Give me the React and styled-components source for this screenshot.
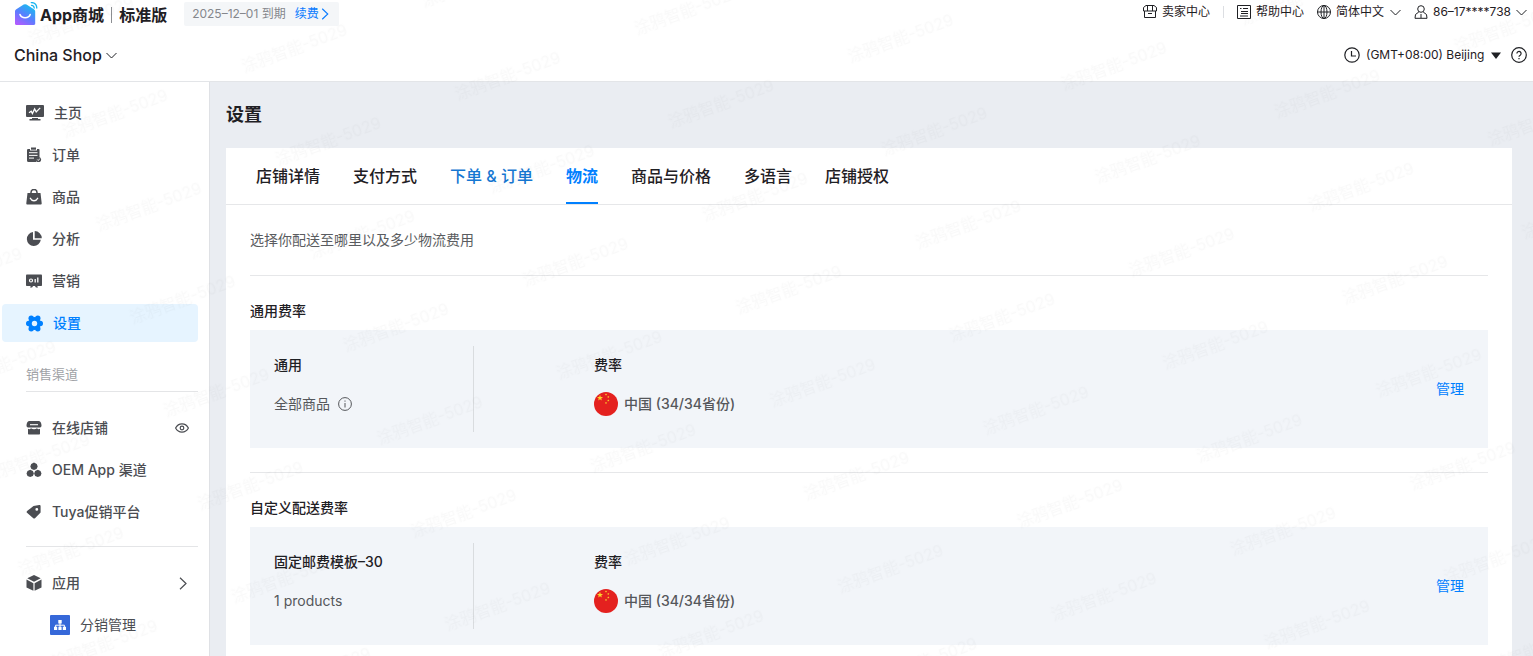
import React from 'react';
import styled, { createGlobalStyle } from 'styled-components';

const GlobalStyle = createGlobalStyle`
  * { box-sizing: border-box; }
  body {
    margin: 0;
    background: #eaedf2;
    color: #1f2024;
    font-family: Inter, "Noto Sans CJK SC", sans-serif;
    font-size: 14px;
    line-height: 20px;
    overflow: hidden;
  }
  a { text-decoration: none; color: inherit; }
  button, select { font: inherit; color: inherit; background: none; border: 0; padding: 0; margin: 0; }
  h1, h2, h3, p, ul { margin: 0; padding: 0; }
  svg { display: block; flex: none; }
`;

/* ---------- layout ---------- */

const Page = styled.div`
  position: relative;
  display: flex;
  flex-direction: column;
  height: 100vh;
  overflow: hidden;
`;

const Header = styled.header`
  flex: none;
  display: flex;
  flex-direction: column;
  gap: 13px;
  background: #fff;
  border-bottom: 1px solid #e3e5e8;
  padding: 0 6px 12px 14px;
`;

const HeaderRow = styled.div`
  display: flex;
  align-items: ${(p) => p.$align || 'center'};
  justify-content: space-between;
`;

const Body = styled.div`
  flex: 1;
  display: flex;
  min-height: 0;
`;

/* ---------- header ---------- */

const Brand = styled.div`
  display: flex;
  align-items: center;
  height: 28px;
`;

const BrandName = styled.a`
  display: flex;
  align-items: center;
  gap: 2px;
  padding-top: 2px;
  font-size: 16px;
  font-weight: 700;
  line-height: 24px;
`;

const BrandRule = styled.span`
  width: 1px;
  height: 16px;
  margin: 0 5px;
  background: #8c8e92;
`;

const Expiry = styled.div`
  display: flex;
  align-items: center;
  gap: 9px;
  height: 24px;
  margin-left: 17px;
  padding: 0 10px 0 8px;
  border-radius: 2px;
  background: #f4f6f8;
  color: #85878c;
  font-size: 12px;
`;

const RenewLink = styled.a`
  display: flex;
  align-items: center;
  gap: 2px;
  color: #0a7cff;
`;

const Tools = styled.nav`
  display: flex;
  align-items: center;
  gap: 13px;
  height: 24px;
  font-size: 12px;
`;

const ToolRule = styled.span`
  width: 1px;
  height: 12px;
  background: #dcdee2;
`;

const toolLayout = `
  display: flex;
  align-items: center;
  gap: 5px;
  line-height: 20px;
`;

const ToolLink = styled.a`${toolLayout}`;
const ToolButton = styled.button`${toolLayout}`;
const ToolField = styled.label`${toolLayout}`;

const PlainSelect = styled.select`
  appearance: none;
  outline: none;
  cursor: pointer;
`;

const ShopField = styled.label`
  display: flex;
  align-items: center;
  gap: 4px;
  height: 28px;
  font-size: 16px;
  font-weight: 500;
`;

const ZoneBar = styled.div`
  display: flex;
  align-items: center;
  gap: 10px;
  height: 28px;
`;

const ZoneField = styled.label`
  display: flex;
  align-items: center;
  gap: 6px;
  font-size: 12px;
`;

const HelpButton = styled.button`
  display: flex;
`;

/* ---------- sidebar ---------- */

const Sidebar = styled.aside`
  flex: none;
  width: 210px;
  padding: 12px 11px 0 2px;
  background: #fff;
  border-right: 1px solid #dfe1e5;
`;

const NavList = styled.ul`
  display: flex;
  flex-direction: column;
  gap: 4px;
  list-style: none;
`;

const NavItem = styled.a`
  display: flex;
  align-items: center;
  gap: 10px;
  height: 38px;
  padding: 0 9px 0 ${(p) => (p.$sub ? 48 : 24)}px;
  border-radius: 4px;
  font-weight: ${(p) => (p.$sub ? 400 : 500)};
  color: ${(p) => (p.$active ? '#0080ff' : '#4b4d52')};
  background: ${(p) => (p.$active ? '#e6f4ff' : 'transparent')};

  & > span { flex: 1; }
`;

const NavHeading = styled.h2`
  margin: 22px 0 17px 24px;
  padding-bottom: 7px;
  border-bottom: 1px solid #e4e5e7;
  color: #a0a2a6;
  font-size: 13px;
  font-weight: 400;
`;

const NavRule = styled.hr`
  height: 1px;
  margin: 15px 0 17px 24px;
  border: 0;
  background: #e4e5e7;
`;

/* ---------- content ---------- */

const Main = styled.main`
  flex: 1;
  min-width: 0;
  display: flex;
  flex-direction: column;
  padding: 20px 21px 0 16px;
`;

const Title = styled.h1`
  margin-bottom: 20px;
  font-size: 18px;
  font-weight: 600;
  line-height: 26px;
`;

const Panel = styled.section`
  flex: 1;
  background: #fff;
`;

const Tabs = styled.nav`
  display: flex;
  gap: 33px;
  height: 57px;
  padding: 0 30px;
  border-bottom: 1px solid #e6e7e9;
`;

const Tab = styled.a`
  height: 56px;
  font-size: 16px;
  line-height: 56px;
  font-weight: ${(p) => (p.$active ? 700 : 500)};
  color: ${(p) => (p.$active ? '#0080ff' : p.$visited ? '#1677d2' : '#1f2024')};
  box-shadow: ${(p) => (p.$active ? 'inset 0 -2px #0080ff' : 'none')};
`;

const PanelBody = styled.div`
  padding: 0 24px;
`;

const Intro = styled.p`
  padding: 25px 0;
  color: #5a5c60;
`;

const RateSection = styled.section`
  padding: 25px 0 24px;
  border-top: 1px solid #e6e7e9;
`;

const RateHeading = styled.h2`
  margin-bottom: 9px;
  font-size: 14px;
  font-weight: 500;
`;

const RateCard = styled.div`
  display: flex;
  align-items: center;
  padding: 16px 24px;
  background: #f2f5f9;
`;

const RateColumn = styled.div`
  display: flex;
  flex-direction: column;
  gap: 17px;
  height: 86px;
  padding-top: 9px;
  width: ${(p) => (p.$first ? '200px' : 'auto')};
  border-right: ${(p) => (p.$first ? '1px solid #d9dcdf' : 'none')};
  margin-right: ${(p) => (p.$first ? '120px' : '0')};
`;

const RateLabel = styled.h3`
  font-size: 14px;
  font-weight: 500;
`;

const RateValue = styled.div`
  display: flex;
  align-items: center;
  gap: ${(p) => (p.$strong ? 6 : 8)}px;
  height: 24px;
  color: #55575b;
  font-weight: ${(p) => (p.$strong ? 500 : 400)};
`;

const ManageLink = styled.a`
  margin-left: auto;
  color: #0080ff;
`;

/* ---------- watermark ---------- */

const WatermarkLayer = styled.svg`
  position: absolute;
  inset: 0;
  width: 100%;
  height: 100%;
  pointer-events: none;
  opacity: 0.02;
`;

/* ---------- icons ---------- */

const Line = ({ w = 14, h, box = '0 0 14 14', sw = 1, children }) => (
  <svg width={w} height={h || w} viewBox={box} fill="none" stroke="currentColor" strokeWidth={sw} aria-hidden="true">
    {children}
  </svg>
);

const Solid = ({ w = 16, box = '0 0 16 16', children }) => (
  <svg width={w} height={w} viewBox={box} fill="currentColor" aria-hidden="true">{children}</svg>
);

const ChevronDown = () => <Line w={11} h={7} box="0 0 11 7"><path d="M.5 1l5 5 5-5" /></Line>;

const LogoIcon = () => (
  <svg width="24" height="26" viewBox="0 0 24 26" aria-hidden="true">
    <defs>
      <linearGradient id="logoFill" x1="0.200" y1="1" x2="0.800" y2="0">
        <stop offset="0" stopColor="#b05cff" />
        <stop offset=".45" stopColor="#5a7dff" />
        <stop offset="1" stopColor="#12c2ee" />
      </linearGradient>
    </defs>
    <path d="M1 9.500c0-1 .5-1.800 1.300-2.300l7.400-4.600a2.500 2.500 0 0 1 2.800 0l7.400 4.600c.8.500 1.300 1.300 1.300 2.300v12.300c0 .7-.5 1.200-1.200 1.200H2.200c-.7 0-1.200-.5-1.200-1.200z" fill="url(#logoFill)" />
    <path d="M6 12.500c1.600 4.400 8.600 4.400 10.200 0" fill="none" stroke="#fff" strokeWidth="1.600" strokeLinecap="round" />
    <path d="M17.500 3.300c1.600.1 2.600 1.100 2.700 2.700M17.300.5c3.400.100 5.400 2.200 5.500 5.500" fill="none" stroke="#18b4f0" strokeWidth="1.300" strokeLinecap="round" />
  </svg>
);

const SellerIcon = () => (
  <Line><path d="M3 .5h8l2.500 2v3.500H.5V2.500zM1.500 6v6.500h11V6M4.500.5V6M9.500.5V6M5 8.500h4" /></Line>
);

const DocIcon = () => (
  <Line><path d="M.5.5h13v13H.5zM3 3.500h1.500M6 3.500h5M4 6.500h7M4 8.500h7M3 11h8" /></Line>
);

const GlobeIcon = () => (
  <Line><circle cx="7" cy="7" r="6.500" /><ellipse cx="7" cy="7" rx="3" ry="6.500" /><path d="M.5 7h13M7 .5v13" /></Line>
);

const UserIcon = () => (
  <Line><circle cx="7" cy="4" r="3.300" /><path d="M4.800 7L1.500 9.500 1 13.300h12l-.5-3.800L9.200 7M7 9v4" /></Line>
);

const ClockIcon = () => (
  <Line w={16} box="0 0 16 16" sw={1.200}><circle cx="8" cy="8" r="7.200" /><path d="M7.500 4v5H12" /></Line>
);

const HelpIcon = () => (
  <Line w={16} box="0 0 16 16" sw={1.200}>
    <circle cx="8" cy="8" r="7.300" />
    <path d="M5.900 6.500a2.100 2.100 0 1 1 3.300 1.700c-.8.500-1.200.8-1.200 1.500M8 11v1.200" />
  </Line>
);

const HomeIcon = () => (
  <Solid w={18} box="0 0 18 18">
    <path d="M1 1h16a1 1 0 0 1 1 1v10a1 1 0 0 1-1 1H1a1 1 0 0 1-1-1V2a1 1 0 0 1 1-1z" />
    <path d="M6 14h6v1H6zM3.500 15h11v1.400h-11z" />
    <path d="M3 8.800l2.200-1.600 1.200 2.300 2.200-4.600 1.600 3 4-4" fill="none" stroke="#fff" strokeWidth="1.300" />
  </Solid>
);

const OrderIcon = () => (
  <Solid>
    <path d="M2.500 2H4v1.500h7V2h1.500c.6 0 1 .4 1 1v7.500a3 3 0 0 0-3 4.500h-8a1.500 1.500 0 0 1-1.500-1.500V3c0-.6.900-1 1.500-1z" />
    <path d="M5 .5h5v2.200H5z" />
    <path d="M3 5.700h8.500M3 8.400h8.500M3 11.100h5" stroke="#fff" strokeWidth="1" />
    <circle cx="12.500" cy="12.500" r="2.600" />
    <path d="M11.300 12.500l1 1 1.500-1.900" fill="none" stroke="#fff" strokeWidth=".9" />
  </Solid>
);

const BagIcon = () => (
  <Solid>
    <path d="M1.500 4h13l1.200 10.200c.1.800-.4 1.300-1.200 1.300h-13c-.8 0-1.300-.5-1.200-1.300z" />
    <path d="M5 5V3.500a3 3 0 0 1 6 0V5" fill="none" stroke="currentColor" strokeWidth="1.500" />
    <path d="M4.300 9.300c1.500 3.200 5.900 3.200 7.400 0" fill="none" stroke="#fff" strokeWidth="1.400" strokeLinecap="round" />
  </Solid>
);

const PieIcon = () => (
  <Solid><path d="M7 1v7.800h7.800A7 7 0 1 1 7 1zM8.700 0a7.300 7.300 0 0 1 7.100 7.200H8.700z" /></Solid>
);

const BoardIcon = () => (
  <Solid>
    <path d="M.8 1.500h14.400c.5 0 .8.300.8.800v9.900c0 .5-.3.800-.8.800H.8c-.5 0-.8-.3-.8-.8V2.300c0-.5.300-.8.800-.8z" />
    <path d="M5 12.500h2.500L6 14.500H4zM8.500 12.500H11l1 2h-2z" />
    <circle cx="5" cy="7.500" r="1.500" fill="none" stroke="#fff" strokeWidth="1.200" />
    <path d="M9.200 6v3.500M11.800 4.500v5" stroke="#fff" strokeWidth="1.300" />
  </Solid>
);

/* six round lobes around a hollow centre */
const GearIcon = () => (
  <Solid w={17} box="0 0 17 17">
    <circle cx="8.500" cy="8.500" r="6.400" />
    <circle cx="5.200" cy="3.200" r="2.700" />
    <circle cx="11.800" cy="3.200" r="2.700" />
    <circle cx="2.700" cy="8.500" r="2.700" />
    <circle cx="14.300" cy="8.500" r="2.700" />
    <circle cx="5.200" cy="13.800" r="2.700" />
    <circle cx="11.800" cy="13.800" r="2.700" />
    <circle cx="8.500" cy="8.500" r="2.700" fill="#e6f4ff" />
  </Solid>
);

const StoreIcon = () => (
  <Solid>
    <path d="M3 1h10c1.500 0 2.500 2.500 2.500 4.500 0 1.200-.7 2-1.500 2H2c-.8 0-1.500-.8-1.500-2C.5 3.500 1.500 1 3 1z" />
    <path d="M2 8.800c1 .6 2.200.4 3-.5 1.500 1.200 4.500 1.200 6 0 .8.900 2 1.100 3 .5v4.700c0 .6-.4 1-1 1H3c-.6 0-1-.4-1-1z" />
    <path d="M4 4.700h8" stroke="#fff" strokeWidth="1.100" />
  </Solid>
);

const ClusterIcon = () => (
  <Solid>
    <path d="M8 .5l2.800 1.400.9 2.500-1.100 2.600L8 8l-2.600-1-1.100-2.600.9-2.500zM4.200 7.800l2.700 1.100 1 2.700-1 2.500-2.700 1-2.700-1-1-2.500 1-2.700zM11.800 7.800l2.700 1.100 1 2.700-1 2.500-2.700 1-2.700-1-1-2.500 1-2.700z" />
  </Solid>
);

const TagIcon = () => (
  <Solid>
    <path fillRule="evenodd" d="M7.500 1.900l5.700-.8c.9-.1 1.400.4 1.400 1.200v6.200L9 14.200c-.6.500-1.200.5-1.700 0L1 8.700c-.5-.5-.5-1.100.1-1.600zM10.800 4a1.400 1.400 0 1 0 0 2.800 1.400 1.400 0 0 0 0-2.800z" />
  </Solid>
);

const CubeIcon = () => (
  <Solid>
    <path d="M8 0l6.700 3.300L8 6.800 1.300 3.300zM.5 4.600l6.900 3.600v7.600L.5 12.400zM15.500 4.600L8.600 8.200v7.600l6.900-3.400z" />
  </Solid>
);

const EyeIcon = () => (
  <Line w={14} h={10} box="0 0 14 10" sw={1.200}>
    <path d="M.6 5C3.500-.5 10.500-.5 13.400 5 10.500 10.500 3.500 10.500.6 5z" /><circle cx="7" cy="5" r="1.800" />
  </Line>
);

const ChevronRight = ({ w = 12, h = 13 }) => (
  <Line w={w} h={h} box="0 0 8 13" sw={1.200}><path d="M1 .8l6 5.700-6 5.700" /></Line>
);

const TreeIcon = () => (
  <svg width="20" height="20" viewBox="0 0 20 20" aria-hidden="true">
    <rect width="20" height="20" rx="1" fill="#3668d9" />
    <path d="M8.300 5h3.400v3.400H8.300zM4 11.800h3.200V15H4zM8.400 11.800h3.200V15H8.400zM12.800 11.800H16V15h-3.200z" fill="#fff" />
    <path d="M10 8v4M5.600 12v-1.800h8.800V12" fill="none" stroke="#fff" strokeWidth="1" />
  </svg>
);

const InfoIcon = () => (
  <Line><circle cx="7" cy="7" r="6.400" /><path d="M7 3.500v1.200M7 6v4.500" /></Line>
);

const star = (cx, cy, r) => {
  const pts = [];
  for (let i = 0; i < 10; i++) {
    const a = (Math.PI / 5) * i - Math.PI / 2;
    const k = i % 2 ? r * 0.4 : r;
    pts.push(`${cx + k * Math.cos(a)},${cy + k * Math.sin(a)}`);
  }
  return pts.join(' ');
};

const FlagIcon = () => (
  <svg width="24" height="24" viewBox="0 0 24 24" aria-hidden="true">
    <circle cx="12" cy="12" r="12" fill="#e4211f" />
    <g fill="#fbd42c">
      <polygon points={star(6, 6, 3.2)} />
      <polygon points={star(12, 2.5, 1.2)} />
      <polygon points={star(14.3, 5, 1.2)} />
      <polygon points={star(14.3, 8.5, 1.2)} />
      <polygon points={star(12, 11, 1.2)} />
    </g>
  </svg>
);

/* ---------- data ---------- */

const mainNav = [
  { label: '主页', Icon: HomeIcon },
  { label: '订单', Icon: OrderIcon },
  { label: '商品', Icon: BagIcon },
  { label: '分析', Icon: PieIcon },
  { label: '营销', Icon: BoardIcon },
  { label: '设置', Icon: GearIcon, active: true },
];

const channelNav = [
  { label: '在线店铺', Icon: StoreIcon, Extra: EyeIcon },
  { label: 'OEM App 渠道', Icon: ClusterIcon },
  { label: 'Tuya促销平台', Icon: TagIcon },
];

const appNav = [
  { label: '应用', Icon: CubeIcon, Extra: ChevronRight },
  { label: '分销管理', Icon: TreeIcon, sub: true },
];

const tabs = [
  { label: '店铺详情' },
  { label: '支付方式' },
  { label: '下单 & 订单', visited: true },
  { label: '物流', active: true },
  { label: '商品与价格' },
  { label: '多语言' },
  { label: '店铺授权' },
];

const rates = [
  { heading: '通用费率', name: '通用', scope: '全部商品', info: true },
  { heading: '自定义配送费率', name: '固定邮费模板–30', scope: '1 products' },
];

/* ---------- components ---------- */

const Nav = ({ items }) => (
  <NavList>
    {items.map(({ label, Icon, Extra, active, sub }) => (
      <li key={label}>
        <NavItem href="#" $active={active} $sub={sub} aria-current={active ? 'page' : undefined}>
          <Icon />
          <span>{label}</span>
          {Extra && <Extra />}
        </NavItem>
      </li>
    ))}
  </NavList>
);

const TopBar = () => (
  <Header>
    <HeaderRow $align="flex-start">
      <Brand>
        <BrandName href="#">
          <LogoIcon />
          <span>App商城</span>
          <BrandRule />
          <span>标准版</span>
        </BrandName>
        <Expiry>
          <span>2025–12–01 到期</span>
          <RenewLink href="#">续费 <ChevronRight w={8} h={12} /></RenewLink>
        </Expiry>
      </Brand>
      <Tools>
        <ToolLink href="#"><SellerIcon />卖家中心</ToolLink>
        <ToolRule />
        <ToolLink href="#"><DocIcon />帮助中心</ToolLink>
        <ToolField>
          <GlobeIcon />
          <PlainSelect aria-label="语言">
            <option>简体中文</option>
          </PlainSelect>
          <ChevronDown />
        </ToolField>
        <ToolButton type="button"><UserIcon />86–17****738<ChevronDown /></ToolButton>
      </Tools>
    </HeaderRow>
    <HeaderRow>
      <ShopField>
        <PlainSelect aria-label="店铺">
          <option>China Shop</option>
        </PlainSelect>
        <ChevronDown />
      </ShopField>
      <ZoneBar>
        <ZoneField>
          <ClockIcon />
          <PlainSelect aria-label="时区">
            <option>(GMT+08:00) Beijing</option>
          </PlainSelect>
          <svg width="10" height="7" viewBox="0 0 10 7" aria-hidden="true"><path d="M0 .5h10L5 7z" fill="#1f2024" /></svg>
        </ZoneField>
        <HelpButton type="button" aria-label="帮助"><HelpIcon /></HelpButton>
      </ZoneBar>
    </HeaderRow>
  </Header>
);

const Rate = ({ heading, name, scope, info }) => (
  <RateSection>
    <RateHeading>{heading}</RateHeading>
    <RateCard>
      <RateColumn $first>
        <RateLabel>{name}</RateLabel>
        <RateValue>{scope}{info && <InfoIcon />}</RateValue>
      </RateColumn>
      <RateColumn>
        <RateLabel>费率</RateLabel>
        <RateValue $strong><FlagIcon />中国 (34/34省份)</RateValue>
      </RateColumn>
      <ManageLink href="#">管理</ManageLink>
    </RateCard>
  </RateSection>
);

const Watermark = () => (
  <WatermarkLayer aria-hidden="true">
    <defs>
      <pattern id="mark" width="191" height="99" patternUnits="userSpaceOnUse" patternTransform="translate(-370 66) rotate(-20)">
        <text x="2" y="18" fontSize="16">涂鸦智能-5029</text>
      </pattern>
    </defs>
    <rect width="100%" height="100%" fill="url(#mark)" />
  </WatermarkLayer>
);

const App = () => (
  <Page>
    <GlobalStyle />
    <TopBar />
    <Body>
      <Sidebar>
        <Nav items={mainNav} />
        <NavHeading>销售渠道</NavHeading>
        <Nav items={channelNav} />
        <NavRule />
        <Nav items={appNav} />
      </Sidebar>
      <Main>
        <Title>设置</Title>
        <Panel>
          <Tabs>
            {tabs.map((t) => (
              <Tab key={t.label} href="#" $active={t.active} $visited={t.visited}>{t.label}</Tab>
            ))}
          </Tabs>
          <PanelBody>
            <Intro>选择你配送至哪里以及多少物流费用</Intro>
            {rates.map((r) => <Rate key={r.heading} {...r} />)}
          </PanelBody>
        </Panel>
      </Main>
    </Body>
    <Watermark />
  </Page>
);

export default App;
